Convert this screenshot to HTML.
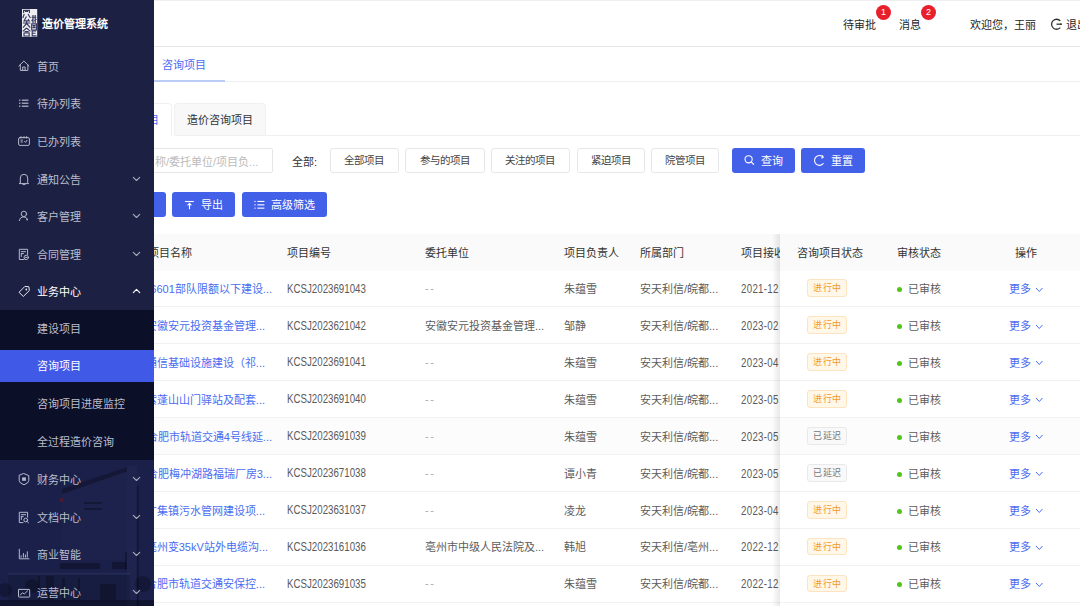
<!DOCTYPE html>
<html lang="zh-CN"><head><meta charset="utf-8">
<style>
*{box-sizing:border-box;margin:0;padding:0}
html,body{width:1080px;height:606px;overflow:hidden;background:#fff;font-family:"Liberation Sans",sans-serif;color:#333}
.abs{position:absolute}
#side{position:absolute;left:0;top:0;width:154px;height:606px;background:#1c2144;z-index:10;overflow:hidden}
.mt{position:absolute;left:36.5px;height:20px;line-height:20px;font-size:11px;white-space:nowrap}
.ic{position:absolute;left:14px}
.ar{position:absolute;left:126px}
#hdr{position:absolute;left:154px;top:0;width:926px;height:47px;border-top:1px solid #eceef0;border-bottom:1px solid #e6e7ea}
.htx{position:absolute;font-size:11px;line-height:14px;color:#262626;top:18px;white-space:nowrap}
.badge{position:absolute;top:4.5px;width:15px;height:15px;border-radius:50%;background:#e8202c;color:#fff;font-size:9px;line-height:15px;text-align:center}
#tabs{position:absolute;left:154px;top:47px;width:926px;height:35px;border-bottom:1px solid #eeeff2}
.btn{position:absolute;height:25px;border:1px solid #e5e7ea;border-radius:3px;background:#fff;font-size:10.5px;line-height:23px;text-align:center;color:#444;white-space:nowrap}
.pbtn{position:absolute;height:25px;border-radius:3px;background:#4360e9;color:#fff;font-size:11px;line-height:25px;white-space:nowrap}
.pbtn svg{position:absolute;left:0;top:0}
#thead{position:absolute;left:154px;top:234px;width:926px;height:36.5px;background:#fafafa}
.th{position:absolute;top:246px;font-size:11px;line-height:14px;color:#333;z-index:2;white-space:nowrap}
.row{position:absolute;left:0;width:1080px;height:36.9px;border-bottom:1px solid #f1f1f3}
.c{position:absolute;top:11.5px;font-size:11px;line-height:14px;color:#5c5c5c;white-space:nowrap}
.link{color:#4a6cf0}
.dash{color:#aaa;letter-spacing:1.6px;top:10.5px}
.code{font-size:12px;top:11px;transform:scaleX(0.81);transform-origin:0 0;color:#5a5a5a}
.date{width:39px;height:16px;overflow:hidden;top:10px}
.fixed{position:absolute;left:780px;top:0;width:300px;height:35.6px;background:#fff}
.tag{position:absolute;left:27.2px;top:8.8px;width:39.8px;height:17.8px;border-radius:3px;font-size:9px;letter-spacing:0.5px;text-indent:0.5px;line-height:16px;text-align:center}
.tag-o{background:#fff7e8;border:1px solid #fde3c0;color:#f39a2a}
.tag-g{background:#f9f9f9;border:1px solid #e9e9e9;color:#777}
.dot{position:absolute;left:116.5px;top:16.5px;width:5px;height:5px;border-radius:50%;background:#52c41a}
.chev{position:absolute;left:255px;top:16px}
#shadow{position:absolute;left:772px;top:234px;width:8px;height:372px;background:linear-gradient(to right,rgba(0,0,0,0),rgba(0,0,0,0.09));z-index:3}
</style></head><body>

<div id="side">
  <!-- building bg -->
  <svg class="abs" style="left:0;top:455px" width="154" height="151" viewBox="0 455 154 151">
    <rect x="0" y="455" width="154" height="151" fill="#1b204b"/>
    <polygon points="62,490 127,466 127,560 62,560" fill="rgba(255,255,255,0.012)"/>
    <polygon points="62,489 127,467 127,471.5 62,494" fill="rgba(0,0,0,0.3)"/>
    <rect x="60" y="498" width="3" height="4" fill="rgba(120,20,30,0.5)"/>
    <rect x="84" y="502" width="18" height="2" fill="rgba(0,0,0,0.28)"/>
    <rect x="84" y="508" width="18" height="2" fill="rgba(0,0,0,0.28)"/>
    <rect x="127" y="466" width="10" height="140" fill="rgba(255,255,255,0.02)"/>
    <rect x="136.8" y="486" width="1.8" height="120" fill="rgba(0,0,0,0.32)"/>
    <rect x="60" y="563" width="40" height="6" fill="rgba(0,0,0,0.3)"/>
    <rect x="112" y="562" width="14" height="7" fill="rgba(0,0,0,0.3)"/>
    <rect x="125" y="552" width="2" height="18" fill="rgba(0,0,0,0.3)"/>
    <rect x="8" y="573" width="122" height="1.5" fill="rgba(255,255,255,0.05)"/>
    <rect x="8" y="575" width="122" height="27" fill="rgba(0,0,0,0.12)"/>
    <g fill="rgba(0,0,0,0.25)">
      <rect x="38" y="576" width="2" height="24"/><rect x="46" y="576" width="8" height="24"/><rect x="62" y="578" width="3" height="22"/>
      <rect x="78" y="578" width="2" height="22"/><rect x="100" y="584" width="16" height="16"/>
      <circle cx="5" cy="590" r="7"/><circle cx="32" cy="586" r="7"/><circle cx="143" cy="584" r="8"/>
    </g>
    <rect x="0" y="600" width="154" height="6" fill="rgba(0,0,0,0.35)"/>
  </svg>
  <svg class="abs" style="left:22px;top:9px" width="16" height="28" viewBox="0 0 16 28">
    <rect x="0" y="0" width="15.2" height="27.8" fill="#eeeef2"/>
    <g stroke="#34385e" stroke-width="1.15" fill="none">
      <path d="M1 1.3 H8 M1.6 1.3 V4 M7.4 1.3 V4 M3 2.5 H6"/>
      <path d="M2.3 5 L0.8 9 M6 5 L8.4 9 M4.5 7.5 L2 11.8 H7.2 L6 10.2"/>
      <path d="M0.8 14 H8.4 M4.6 12.2 V14.5 L1 18.6 M4.6 14.5 L8.3 18.6"/>
      <path d="M4.6 19 L0.8 22.4 M4.6 19 L8.4 22.4 M2.6 22.6 H6.6 M2 24 H7.2 V27 H2 Z"/>
      <path d="M9.6 8.2 H14.4 M11 6 V14 M13.2 6 V14 M9.6 12.2 L11 10.2 M12.4 12.2 L14.4 10.2"/>
      <path d="M9.7 14.8 H14.4 V21 H9.7 Z M10.6 16.6 H13.5 M10.6 18.6 H13.5 M12 16.6 V18.6"/>
      <path d="M10.2 21.8 V26.8 H14.6 M10.2 21.8 H14.2 M10.2 24.2 H13.6"/>
    </g>
  </svg>
  <div class="abs" style="left:42px;top:16px;font-size:11px;line-height:16px;font-weight:bold;color:#fff;white-space:nowrap">造价管理系统</div>
  <div class="abs" style="left:0;top:310px;width:154px;height:150px;background:#0b0f28"></div>
  <div class="abs" style="left:0;top:350px;width:154px;height:32px;background:#4059e6"></div>
  <svg class="ic" style="top:56px" width="20" height="20" viewBox="0 0 20 20"><path d="M4.9 10 L9.9 5 L14.9 10" fill="none" stroke="#b6bacb" stroke-width="1.0" stroke-linejoin="round" stroke-linecap="round"/><path d="M6.3 9 V14.4 H13.9 V9" fill="none" stroke="#b6bacb" stroke-width="1.0" stroke-linejoin="round" stroke-linecap="round"/><path d="M8.7 14.4 V11 H11.1 V14.4" fill="none" stroke="#b6bacb" stroke-width="1.0" stroke-linejoin="round" stroke-linecap="round"/></svg><div class="mt" style="top:57px;color:#babecc">首页</div><svg class="ic" style="top:93px" width="20" height="20" viewBox="0 0 20 20"><g fill="#b6bacb"><rect x="5" y="6.6" width="1.4" height="1.2"/><rect x="5" y="9.6" width="1.4" height="1.2"/><rect x="5" y="12.6" width="1.4" height="1.2"/><rect x="7.8" y="6.6" width="6.6" height="1.2"/><rect x="7.8" y="9.6" width="6.6" height="1.2"/><rect x="7.8" y="12.6" width="6.6" height="1.2"/></g></svg><div class="mt" style="top:94px;color:#babecc">待办列表</div><svg class="ic" style="top:131px" width="20" height="20" viewBox="0 0 20 20"><rect x="4.6" y="6.6" width="10.8" height="7.8" rx="1.3" fill="none" stroke="#b6bacb" stroke-width="1.0" stroke-linejoin="round" stroke-linecap="round"/><path d="M7 5.6 V7 M10 5.6 V7 M12.6 5.6 V7" fill="none" stroke="#b6bacb" stroke-width="1.0" stroke-linejoin="round" stroke-linecap="round"/><path d="M7 9.2 H8.4 M7 11 H8.4 M10.6 10.4 L11.5 11.4 L13 9.3" fill="none" stroke="#b6bacb" stroke-width="1.0" stroke-linejoin="round" stroke-linecap="round"/></svg><div class="mt" style="top:132px;color:#babecc">已办列表</div><svg class="ic" style="top:168.5px" width="20" height="20" viewBox="0 0 20 20"><path d="M6.3 13.6 V9 Q6.3 5.3 10 5.3 Q13.7 5.3 13.7 9 V13.6 L14.6 14.6 H5.4 Z" fill="none" stroke="#b6bacb" stroke-width="1.0" stroke-linejoin="round" stroke-linecap="round"/><path d="M9 15.6 H11" fill="none" stroke="#b6bacb" stroke-width="1.0" stroke-linejoin="round" stroke-linecap="round"/></svg><div class="mt" style="top:169.5px;color:#babecc">通知公告</div><svg class="ar" style="top:168.5px" width="20" height="20" viewBox="0 0 20 20"><path d="M7.3 8.3 L10.5 11.5 L13.7 8.3" fill="none" stroke="#a3a7b8" stroke-width="1.15" stroke-linecap="round" stroke-linejoin="round"/></svg><svg class="ic" style="top:206px" width="20" height="20" viewBox="0 0 20 20"><circle cx="9.9" cy="7.9" r="2.7" fill="none" stroke="#b6bacb" stroke-width="1.0" stroke-linejoin="round" stroke-linecap="round"/><path d="M5.4 14.6 Q5.9 10.9 9.9 10.9 Q12.4 10.9 13.3 13" fill="none" stroke="#b6bacb" stroke-width="1.0" stroke-linejoin="round" stroke-linecap="round"/><circle cx="13.1" cy="13.6" r="0.9" fill="#b6bacb"/></svg><div class="mt" style="top:207px;color:#babecc">客户管理</div><svg class="ar" style="top:206px" width="20" height="20" viewBox="0 0 20 20"><path d="M7.3 8.3 L10.5 11.5 L13.7 8.3" fill="none" stroke="#a3a7b8" stroke-width="1.15" stroke-linecap="round" stroke-linejoin="round"/></svg><svg class="ic" style="top:243.5px" width="20" height="20" viewBox="0 0 20 20"><path d="M10 15.5 H5.3 V5.3 H13.6 V10.5" fill="none" stroke="#b6bacb" stroke-width="1.0" stroke-linejoin="round" stroke-linecap="round"/><path d="M7.3 7.7 H11.5 M7.3 9.6 H9.5 M7.3 9.6 V12.5" fill="none" stroke="#b6bacb" stroke-width="1.0" stroke-linejoin="round" stroke-linecap="round"/><circle cx="12.2" cy="13.4" r="2.2" fill="none" stroke="#b6bacb" stroke-width="1.0" stroke-linejoin="round" stroke-linecap="round"/><path d="M11.3 13.4 H13" fill="none" stroke="#b6bacb" stroke-width="1.0" stroke-linejoin="round" stroke-linecap="round"/></svg><div class="mt" style="top:244.5px;color:#babecc">合同管理</div><svg class="ar" style="top:243.5px" width="20" height="20" viewBox="0 0 20 20"><path d="M7.3 8.3 L10.5 11.5 L13.7 8.3" fill="none" stroke="#a3a7b8" stroke-width="1.15" stroke-linecap="round" stroke-linejoin="round"/></svg><svg class="ic" style="top:281px" width="20" height="20" viewBox="0 0 20 20"><path d="M5.3 11 L10.9 5.4 L14.9 5.8 L15.3 9.6 L9.6 15.2 Z" fill="none" stroke="#e6e8ef" stroke-width="1.0" stroke-linejoin="round" stroke-linecap="round"/><circle cx="12.3" cy="8.5" r="0.9" fill="#e6e8ef"/></svg><div class="mt" style="top:282px;color:#fff">业务中心</div><svg class="ar" style="top:281px" width="20" height="20" viewBox="0 0 20 20"><path d="M7.3 11.6 L10.5 8.4 L13.7 11.6" fill="none" stroke="#fff" stroke-width="1.15" stroke-linecap="round" stroke-linejoin="round"/></svg><svg class="ic" style="top:469px" width="20" height="20" viewBox="0 0 20 20"><path d="M10 4.6 L14.8 6.6 V11.6 Q14.8 14 10 15.8 Q5.2 14 5.2 11.6 V6.6 Z" fill="none" stroke="#b6bacb" stroke-width="1.0" stroke-linejoin="round" stroke-linecap="round"/><rect x="8.1" y="8.4" width="3.8" height="3.4" fill="#b6bacb"/></svg><div class="mt" style="top:470px;color:#babecc">财务中心</div><svg class="ar" style="top:469px" width="20" height="20" viewBox="0 0 20 20"><path d="M7.3 8.3 L10.5 11.5 L13.7 8.3" fill="none" stroke="#a3a7b8" stroke-width="1.15" stroke-linecap="round" stroke-linejoin="round"/></svg><svg class="ic" style="top:506.5px" width="20" height="20" viewBox="0 0 20 20"><path d="M9 15.6 H5.3 V5.3 H13.6 V10.2" fill="none" stroke="#b6bacb" stroke-width="1.0" stroke-linejoin="round" stroke-linecap="round"/><path d="M7.3 7.7 H11.7 M7.3 9.6 H9.2 M7.3 9.6 V12.5" fill="none" stroke="#b6bacb" stroke-width="1.0" stroke-linejoin="round" stroke-linecap="round"/><circle cx="11.7" cy="13" r="1.9" fill="none" stroke="#b6bacb" stroke-width="1.0" stroke-linejoin="round" stroke-linecap="round"/><path d="M13 14.4 L14.5 15.8" fill="none" stroke="#b6bacb" stroke-width="1.0" stroke-linejoin="round" stroke-linecap="round"/></svg><div class="mt" style="top:507.5px;color:#babecc">文档中心</div><svg class="ar" style="top:506.5px" width="20" height="20" viewBox="0 0 20 20"><path d="M7.3 8.3 L10.5 11.5 L13.7 8.3" fill="none" stroke="#a3a7b8" stroke-width="1.15" stroke-linecap="round" stroke-linejoin="round"/></svg><svg class="ic" style="top:544px" width="20" height="20" viewBox="0 0 20 20"><path d="M5.3 5.2 V14.8 H15" fill="none" stroke="#b6bacb" stroke-width="1.0" stroke-linejoin="round" stroke-linecap="round"/><path d="M7.1 11.8 V13.2 M9.4 9.5 V13.2 M11.4 11 V13.2 M13.3 7.8 V13.2" fill="none" stroke="#b6bacb" stroke-width="1.0" stroke-linejoin="round" stroke-linecap="round"/></svg><div class="mt" style="top:545px;color:#babecc">商业智能</div><svg class="ar" style="top:544px" width="20" height="20" viewBox="0 0 20 20"><path d="M7.3 8.3 L10.5 11.5 L13.7 8.3" fill="none" stroke="#a3a7b8" stroke-width="1.15" stroke-linecap="round" stroke-linejoin="round"/></svg><svg class="ic" style="top:581.5px" width="20" height="20" viewBox="0 0 20 20"><rect x="4.5" y="7.4" width="11.2" height="7.7" rx="0.6" fill="none" stroke="#b6bacb" stroke-width="1.0" stroke-linejoin="round" stroke-linecap="round"/><path d="M6.4 13 L8.5 10.7 L10.2 12.1 L13.6 8.8" fill="none" stroke="#b6bacb" stroke-width="1.0" stroke-linejoin="round" stroke-linecap="round"/></svg><div class="mt" style="top:582.5px;color:#babecc">运营中心</div><svg class="ar" style="top:581.5px" width="20" height="20" viewBox="0 0 20 20"><path d="M7.3 8.3 L10.5 11.5 L13.7 8.3" fill="none" stroke="#a3a7b8" stroke-width="1.15" stroke-linecap="round" stroke-linejoin="round"/></svg><div class="mt" style="top:319px;color:#babecc">建设项目</div><div class="mt" style="top:356px;color:#fff">咨询项目</div><div class="mt" style="top:394px;color:#babecc">咨询项目进度监控</div><div class="mt" style="top:431.5px;color:#babecc">全过程造价咨询</div>
</div>

<div id="hdr"></div>
<div class="htx" style="left:843px">待审批</div>
<div class="badge" style="left:876px">1</div>
<div class="htx" style="left:899px">消息</div>
<div class="badge" style="left:921px">2</div>
<div class="htx" style="left:970px">欢迎您，王丽</div>
<svg class="abs" style="left:1045px;top:14px" width="20" height="20" viewBox="0 0 20 20"><path d="M15.3 6.9 A5 5 0 1 0 15.3 13.6" fill="none" stroke="#333" stroke-width="1.3"/><path d="M11.5 10.2 H16.3" stroke="#333" stroke-width="1.3"/><circle cx="16" cy="10.2" r="0.9" fill="#333"/></svg>
<div class="htx" style="left:1066px">退出</div>

<div id="tabs"></div>
<div class="abs" style="left:162px;top:58px;font-size:11px;line-height:14px;color:#4a6cf0">咨询项目</div>
<div class="abs" style="left:154px;top:80px;width:71px;height:2px;background:#bccaf6"></div>

<!-- subtabs -->
<div class="abs" style="left:130px;top:103px;width:42px;height:33px;border:1px solid #f0f0f2;border-bottom:none;border-radius:4px 4px 0 0;background:#fff"></div>
<div class="abs" style="left:136.5px;top:113px;font-size:11px;line-height:14px;color:#4a6cf0">项目</div>
<div class="abs" style="left:174px;top:103px;width:92px;height:32.5px;border:1px solid #f0f0f2;border-radius:4px 4px 0 0;background:#f8f8f9"></div>
<div class="abs" style="left:187px;top:113px;font-size:11px;line-height:14px;color:#333">造价咨询项目</div>
<div class="abs" style="left:266px;top:135px;width:814px;height:1px;background:#f0f0f2"></div>

<!-- filter row -->
<div class="abs" style="left:120px;top:147.5px;width:153px;height:25px;border:1px solid #e5e6e9;border-radius:2px"></div>
<div class="abs" style="left:122px;top:155px;font-size:11px;line-height:14px;color:#bbb;white-space:nowrap">项目名称/委托单位/项目负...</div>
<div class="abs" style="left:292px;top:155px;font-size:11px;line-height:14px;color:#333">全部:</div>
<div class="btn" style="left:330px;top:147.5px;width:68.5px">全部项目</div>
<div class="btn" style="left:404.5px;top:147.5px;width:80px">参与的项目</div>
<div class="btn" style="left:490.5px;top:147.5px;width:79px">关注的项目</div>
<div class="btn" style="left:576.5px;top:147.5px;width:68px">紧迫项目</div>
<div class="btn" style="left:651px;top:147.5px;width:68px">院管项目</div>
<div class="pbtn" style="left:732px;top:147.5px;width:63px"><svg width="63" height="25" viewBox="0 0 63 25"><circle cx="16.6" cy="11.3" r="3.6" fill="none" stroke="#fff" stroke-width="1.1"/><path d="M19.2 13.9 L21.6 16.4" stroke="#fff" stroke-width="1.2" stroke-linecap="round"/></svg><span class="abs" style="left:28.5px;top:1px">查询</span></div>
<div class="pbtn" style="left:801px;top:147.5px;width:64px"><svg width="64" height="25" viewBox="0 0 64 25"><path d="M21.8 8.9 A4.9 4.9 0 1 0 22.2 15.6" fill="none" stroke="#fff" stroke-width="1.1" stroke-linecap="round"/><path d="M21.6 7.6 L22.3 9.6 L20.4 10" fill="none" stroke="#fff" stroke-width="1" stroke-linecap="round" stroke-linejoin="round"/></svg><span class="abs" style="left:29.5px;top:1px">重置</span></div>

<div class="pbtn" style="left:120px;top:191.5px;width:45.5px"></div>
<div class="pbtn" style="left:172px;top:191.5px;width:63px"><svg width="63" height="25" viewBox="0 0 63 25"><path d="M13 9.5 H21.8" stroke="#fff" stroke-width="1.1"/><path d="M17.5 17.3 V11.4 M15.6 13.4 L17.5 11.4 L19.4 13.4" fill="none" stroke="#fff" stroke-width="1.1"/></svg><span class="abs" style="left:28.5px;top:1px">导出</span></div>
<div class="pbtn" style="left:241.5px;top:191.5px;width:85.5px"><svg width="86" height="25" viewBox="0 0 86 25"><g fill="#fff"><rect x="12.4" y="8.9" width="1.2" height="1.1"/><rect x="12.4" y="12.3" width="1.2" height="1.1"/><rect x="12.4" y="15.6" width="1.2" height="1.1"/><rect x="15.4" y="8.9" width="7" height="1.1"/><rect x="15.4" y="12.3" width="7" height="1.1"/><rect x="15.4" y="15.6" width="7" height="1.1"/></g></svg><span class="abs" style="left:29.5px;top:1px">高级筛选</span></div>

<!-- table -->
<div id="thead"></div>
<div class="th" style="left:148px">项目名称</div>
<div class="th" style="left:286.8px">项目编号</div>
<div class="th" style="left:425px">委托单位</div>
<div class="th" style="left:563.5px">项目负责人</div>
<div class="th" style="left:640.3px">所属部门</div>
<div class="th" style="left:740.6px;width:39px;overflow:hidden">项目接收日期</div>
<div class="abs" style="left:780px;top:234px;width:300px;height:36.5px;background:#fafafa;z-index:2"></div>
<div class="th" style="left:797.3px;z-index:4">咨询项目状态</div>
<div class="th" style="left:897px;z-index:4">审核状态</div>
<div class="th" style="left:1015px;z-index:4">操作</div>
<div id="shadow"></div>
<div class="row" style="top:270.6px;background:#fff">
<span class="c link" style="right:808px">96601部队限额以下建设...</span>
<span class="c code" style="left:287px">KCSJ2023691043</span>
<span class="c dash" style="left:425px">--</span>
<span class="c" style="left:563.5px">朱蕴雪</span>
<span class="c" style="left:640px">安天利信/皖都...</span>
<span class="c date" style="left:740.8px"><span class="code" style="position:absolute;left:0;top:1.5px;letter-spacing:0.35px">2021-12</span></span>
<div class="fixed" style="background:#fff">
<span class="tag tag-o">进行中</span>
<span class="dot"></span><span class="c" style="left:128px">已审核</span>
<span class="c link" style="left:229px">更多</span><svg class="chev" width="10" height="6" viewBox="0 0 10 6"><path d="M1 1 L4.3 4.5 L7.5 1" fill="none" stroke="#4a6cf0" stroke-width="1"/></svg>
</div>
</div>
<div class="row" style="top:307.5px;background:#fff">
<span class="c link" style="right:815px">安徽安元投资基金管理...</span>
<span class="c code" style="left:287px">KCSJ2023621042</span>
<span class="c " style="left:425px">安徽安元投资基金管理...</span>
<span class="c" style="left:563.5px">邹静</span>
<span class="c" style="left:640px">安天利信/皖都...</span>
<span class="c date" style="left:740.8px"><span class="code" style="position:absolute;left:0;top:1.5px;letter-spacing:0.35px">2023-02</span></span>
<div class="fixed" style="background:#fff">
<span class="tag tag-o">进行中</span>
<span class="dot"></span><span class="c" style="left:128px">已审核</span>
<span class="c link" style="left:229px">更多</span><svg class="chev" width="10" height="6" viewBox="0 0 10 6"><path d="M1 1 L4.3 4.5 L7.5 1" fill="none" stroke="#4a6cf0" stroke-width="1"/></svg>
</div>
</div>
<div class="row" style="top:344.4px;background:#fff">
<span class="c link" style="right:815px">通信基础设施建设（祁...</span>
<span class="c code" style="left:287px">KCSJ2023691041</span>
<span class="c dash" style="left:425px">--</span>
<span class="c" style="left:563.5px">朱蕴雪</span>
<span class="c" style="left:640px">安天利信/皖都...</span>
<span class="c date" style="left:740.8px"><span class="code" style="position:absolute;left:0;top:1.5px;letter-spacing:0.35px">2023-04</span></span>
<div class="fixed" style="background:#fff">
<span class="tag tag-o">进行中</span>
<span class="dot"></span><span class="c" style="left:128px">已审核</span>
<span class="c link" style="left:229px">更多</span><svg class="chev" width="10" height="6" viewBox="0 0 10 6"><path d="M1 1 L4.3 4.5 L7.5 1" fill="none" stroke="#4a6cf0" stroke-width="1"/></svg>
</div>
</div>
<div class="row" style="top:381.3px;background:#fff">
<span class="c link" style="right:815px">紫蓬山山门驿站及配套...</span>
<span class="c code" style="left:287px">KCSJ2023691040</span>
<span class="c dash" style="left:425px">--</span>
<span class="c" style="left:563.5px">朱蕴雪</span>
<span class="c" style="left:640px">安天利信/皖都...</span>
<span class="c date" style="left:740.8px"><span class="code" style="position:absolute;left:0;top:1.5px;letter-spacing:0.35px">2023-05</span></span>
<div class="fixed" style="background:#fff">
<span class="tag tag-o">进行中</span>
<span class="dot"></span><span class="c" style="left:128px">已审核</span>
<span class="c link" style="left:229px">更多</span><svg class="chev" width="10" height="6" viewBox="0 0 10 6"><path d="M1 1 L4.3 4.5 L7.5 1" fill="none" stroke="#4a6cf0" stroke-width="1"/></svg>
</div>
</div>
<div class="row" style="top:418.2px;background:#fcfcfc">
<span class="c link" style="right:808px">合肥市轨道交通4号线延...</span>
<span class="c code" style="left:287px">KCSJ2023691039</span>
<span class="c dash" style="left:425px">--</span>
<span class="c" style="left:563.5px">朱蕴雪</span>
<span class="c" style="left:640px">安天利信/皖都...</span>
<span class="c date" style="left:740.8px"><span class="code" style="position:absolute;left:0;top:1.5px;letter-spacing:0.35px">2023-05</span></span>
<div class="fixed" style="background:#fcfcfc">
<span class="tag tag-g">已延迟</span>
<span class="dot"></span><span class="c" style="left:128px">已审核</span>
<span class="c link" style="left:229px">更多</span><svg class="chev" width="10" height="6" viewBox="0 0 10 6"><path d="M1 1 L4.3 4.5 L7.5 1" fill="none" stroke="#4a6cf0" stroke-width="1"/></svg>
</div>
</div>
<div class="row" style="top:455.1px;background:#fff">
<span class="c link" style="right:808px">合肥梅冲湖路福瑞厂房3...</span>
<span class="c code" style="left:287px">KCSJ2023671038</span>
<span class="c dash" style="left:425px">--</span>
<span class="c" style="left:563.5px">谭小青</span>
<span class="c" style="left:640px">安天利信/皖都...</span>
<span class="c date" style="left:740.8px"><span class="code" style="position:absolute;left:0;top:1.5px;letter-spacing:0.35px">2023-05</span></span>
<div class="fixed" style="background:#fff">
<span class="tag tag-g">已延迟</span>
<span class="dot"></span><span class="c" style="left:128px">已审核</span>
<span class="c link" style="left:229px">更多</span><svg class="chev" width="10" height="6" viewBox="0 0 10 6"><path d="M1 1 L4.3 4.5 L7.5 1" fill="none" stroke="#4a6cf0" stroke-width="1"/></svg>
</div>
</div>
<div class="row" style="top:492.0px;background:#fff">
<span class="c link" style="right:815px">广集镇污水管网建设项...</span>
<span class="c code" style="left:287px">KCSJ2023631037</span>
<span class="c dash" style="left:425px">--</span>
<span class="c" style="left:563.5px">凌龙</span>
<span class="c" style="left:640px">安天利信/皖都...</span>
<span class="c date" style="left:740.8px"><span class="code" style="position:absolute;left:0;top:1.5px;letter-spacing:0.35px">2023-04</span></span>
<div class="fixed" style="background:#fff">
<span class="tag tag-o">进行中</span>
<span class="dot"></span><span class="c" style="left:128px">已审核</span>
<span class="c link" style="left:229px">更多</span><svg class="chev" width="10" height="6" viewBox="0 0 10 6"><path d="M1 1 L4.3 4.5 L7.5 1" fill="none" stroke="#4a6cf0" stroke-width="1"/></svg>
</div>
</div>
<div class="row" style="top:528.9px;background:#fff">
<span class="c link" style="right:812px">亳州变35kV站外电缆沟...</span>
<span class="c code" style="left:287px">KCSJ2023161036</span>
<span class="c " style="left:425px">亳州市中级人民法院及...</span>
<span class="c" style="left:563.5px">韩旭</span>
<span class="c" style="left:640px">安天利信/亳州...</span>
<span class="c date" style="left:740.8px"><span class="code" style="position:absolute;left:0;top:1.5px;letter-spacing:0.35px">2022-12</span></span>
<div class="fixed" style="background:#fff">
<span class="tag tag-o">进行中</span>
<span class="dot"></span><span class="c" style="left:128px">已审核</span>
<span class="c link" style="left:229px">更多</span><svg class="chev" width="10" height="6" viewBox="0 0 10 6"><path d="M1 1 L4.3 4.5 L7.5 1" fill="none" stroke="#4a6cf0" stroke-width="1"/></svg>
</div>
</div>
<div class="row" style="top:565.8px;background:#fff">
<span class="c link" style="right:815px">合肥市轨道交通安保控...</span>
<span class="c code" style="left:287px">KCSJ2023691035</span>
<span class="c dash" style="left:425px">--</span>
<span class="c" style="left:563.5px">朱蕴雪</span>
<span class="c" style="left:640px">安天利信/皖都...</span>
<span class="c date" style="left:740.8px"><span class="code" style="position:absolute;left:0;top:1.5px;letter-spacing:0.35px">2022-12</span></span>
<div class="fixed" style="background:#fff">
<span class="tag tag-o">进行中</span>
<span class="dot"></span><span class="c" style="left:128px">已审核</span>
<span class="c link" style="left:229px">更多</span><svg class="chev" width="10" height="6" viewBox="0 0 10 6"><path d="M1 1 L4.3 4.5 L7.5 1" fill="none" stroke="#4a6cf0" stroke-width="1"/></svg>
</div>
</div>

</body></html>
